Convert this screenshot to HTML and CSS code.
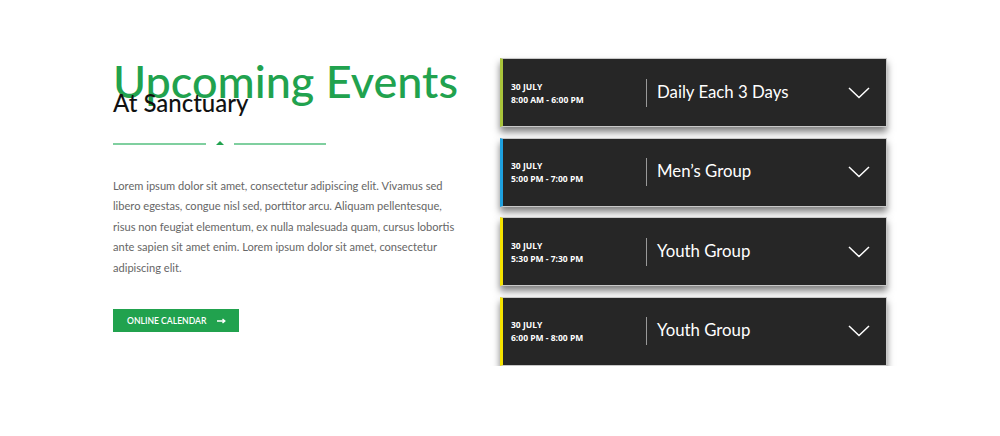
FILE: index.html
```html
<!DOCTYPE html>
<html lang="en">
<head>
    <meta charset="UTF-8">
    <title>Upcoming Events</title>
    <link rel="stylesheet" href="styles.css">
</head>
<body>
    <div class="section">
        <div class="intro">
            <h1>Upcoming Events</h1>
            <h2>At Sanctuary</h2>
            <div class="divider">
                <span class="line"></span>
                <span class="tri"></span>
                <span class="line"></span>
            </div>
            <p>Lorem ipsum dolor sit amet, consectetur adipiscing elit. Vivamus sed libero egestas, congue nisl sed, porttitor arcu. Aliquam pellentesque, risus non feugiat elementum, ex nulla malesuada quam, cursus lobortis ante sapien sit amet enim. Lorem ipsum dolor sit amet, consectetur adipiscing elit.</p>
            <a class="btn" href="#">Online Calendar
                <svg width="9" height="6" viewBox="0 0 9 6"><path d="M0 3H7.5M5.5 1L7.8 3L5.5 5" fill="none" stroke="#fff" stroke-width="1.4"/></svg>
            </a>
        </div>
        <div class="events">
            <div class="event lime">
                <div class="date"><span>30 July</span><span>8:00 AM - 6:00 PM</span></div>
                <div class="title">Daily Each 3 Days</div>
                <svg class="chev" width="22" height="12" viewBox="0 0 22 12"><path d="M1 1L11 10.5L21 1" fill="none" stroke="#fff" stroke-width="1.5"/></svg>
            </div>
            <div class="event blue">
                <div class="date"><span>30 July</span><span>5:00 PM - 7:00 PM</span></div>
                <div class="title">Men’s Group</div>
                <svg class="chev" width="22" height="12" viewBox="0 0 22 12"><path d="M1 1L11 10.5L21 1" fill="none" stroke="#fff" stroke-width="1.5"/></svg>
            </div>
            <div class="event yellow">
                <div class="date"><span>30 July</span><span>5:30 PM - 7:30 PM</span></div>
                <div class="title">Youth Group</div>
                <svg class="chev" width="22" height="12" viewBox="0 0 22 12"><path d="M1 1L11 10.5L21 1" fill="none" stroke="#fff" stroke-width="1.5"/></svg>
            </div>
            <div class="event yellow">
                <div class="date"><span>30 July</span><span>6:00 PM - 8:00 PM</span></div>
                <div class="title">Youth Group</div>
                <svg class="chev" width="22" height="12" viewBox="0 0 22 12"><path d="M1 1L11 10.5L21 1" fill="none" stroke="#fff" stroke-width="1.5"/></svg>
            </div>
        </div>
    </div>
</body>
</html>
```
FILE: styles.css
```css
:root {
    --green: #21a24e;
    --light-green: #7fcf9f;
    --card: #262626;
}

body {
    margin: 0;
    background: #fff;
    font-family: 'Lato', 'Open Sans', sans-serif;
}

.section {
    display: flex;
    padding: 58px 0 0 113px;
}

.intro {
    width: 350px;
    margin-right: 37px;
}

h1 {
    margin: 0;
    font-family: 'Lato', sans-serif;
    font-weight: 500;
    font-size: 45px;
    line-height: 46px;
    color: var(--green);
    white-space: nowrap;
}

h2 {
    margin: -15px 0 0;
    font-family: 'Lato', sans-serif;
    font-weight: 500;
    font-size: 24px;
    line-height: 28px;
    color: #111;
}

.divider {
    display: flex;
    align-items: center;
    margin-top: 24px;
    width: 213px;
}

.divider .line {
    flex: 1;
    height: 2px;
    background: var(--light-green);
}

.divider .tri {
    width: 0;
    height: 0;
    margin: 0 10px 1px;
    border-left: 4px solid transparent;
    border-right: 4px solid transparent;
    border-bottom: 4px solid var(--green);
}

p {
    width: 350px;
    margin: 30px 0 0;
    font-size: 11.1px;
    line-height: 20.4px;
    color: #666;
}

.btn {
    display: inline-flex;
    align-items: center;
    gap: 11px;
    margin-top: 31px;
    height: 23px;
    padding: 0 13px 0 14px;
    background: var(--green);
    color: #fff;
    text-decoration: none;
    text-transform: uppercase;
    font-size: 8.6px;
    font-weight: 600;
}

.events {
    width: 387px;
    display: flex;
    flex-direction: column;
    gap: 10.6px;
}

.event {
    display: flex;
    align-items: center;
    height: 67px;
    background: var(--card);
    border: 1px solid #c8c8c8;
    border-left: 3px solid;
    box-shadow: 0 5px 7px rgba(0, 0, 0, 0.5);
}

.event.lime { border-left-color: #a9c43a; }
.event.blue { border-left-color: #1ea1e0; }
.event.yellow { border-left-color: #f4e200; }

.date {
    display: flex;
    flex-direction: column;
    gap: 2px;
    width: 135px;
    padding-left: 8px;
    font-family: 'Open Sans', sans-serif;
    font-size: 8.5px;
    font-weight: 700;
    color: #fff;
    text-transform: uppercase;
}

.title {
    flex: 1;
    height: 28px;
    padding-left: 10px;
    border-left: 1px solid #999;
    font-family: 'Lato', sans-serif;
    font-size: 16.8px;
    line-height: 25px;
    color: #fff;
}

.chev {
    margin-right: 16px;
}
```
